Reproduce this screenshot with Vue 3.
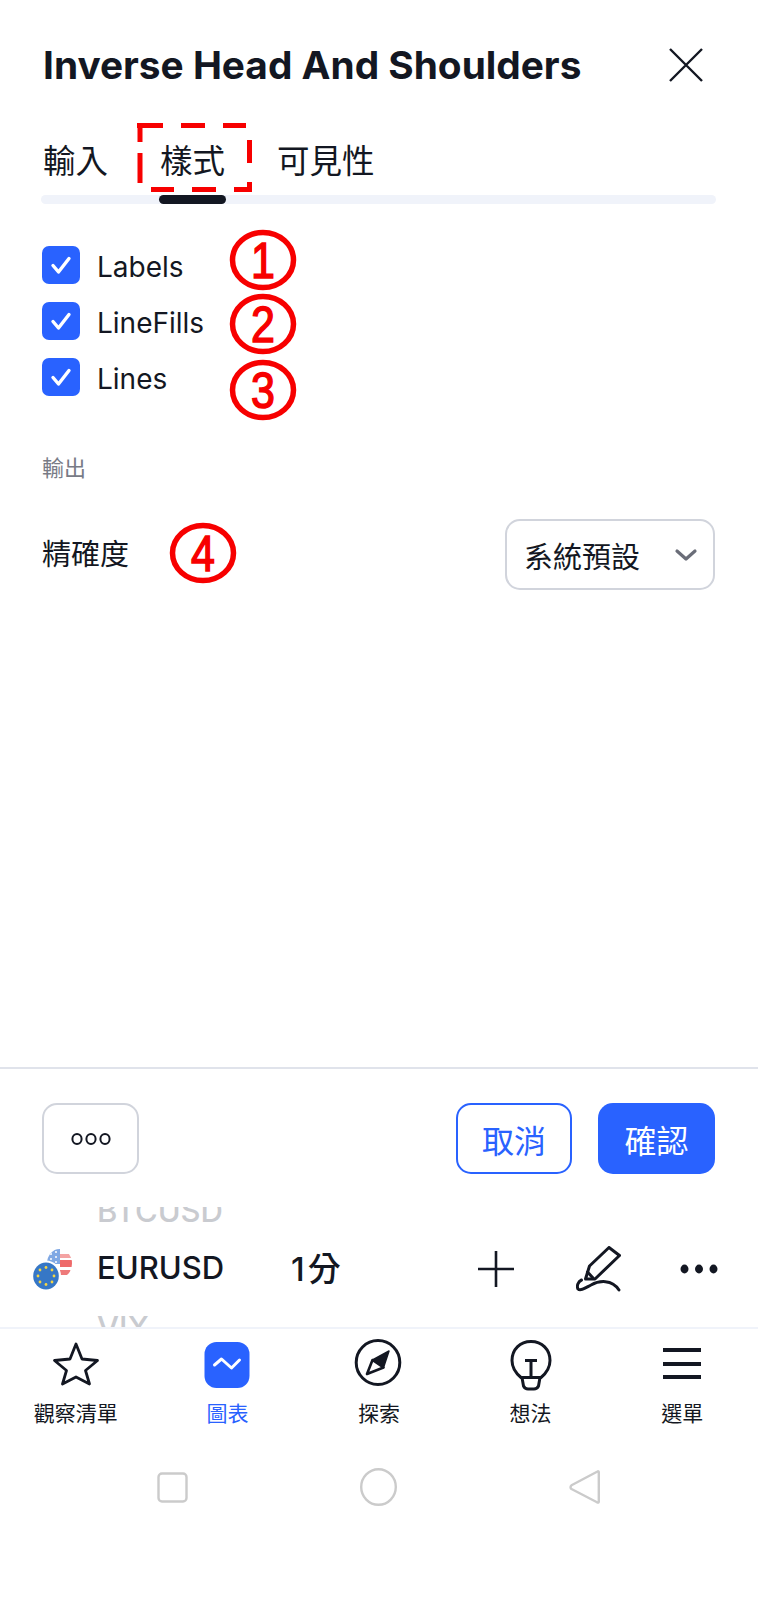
<script setup>
const tabs = [
  { label: '輸入' },
  { label: '樣式', active: true },
  { label: '可見性' }
]
const toggles = ['Labels', 'LineFills', 'Lines']
const callouts = [
  { cx: 263, cy: 260, n: '1' },
  { cx: 263, cy: 324, n: '2' },
  { cx: 263, cy: 390, n: '3' },
  { cx: 203, cy: 553, n: '4' }
]
const navItems = [
  { key: 'star', label: '觀察清單' },
  { key: 'chart', label: '圖表', active: true },
  { key: 'compass', label: '探索' },
  { key: 'bulb', label: '想法' },
  { key: 'menu', label: '選單' }
]
</script>

<template>
  <div class="page">
    <section class="sheet">
      <header class="head">
        <h1 class="title">Inverse Head And Shoulders</h1>
        <svg class="close" width="34" height="34" viewBox="0 0 34 34">
          <path d="M1 1L33 33M33 1L1 33" fill="none" stroke="#131722" stroke-width="2.4" />
        </svg>
      </header>

      <nav class="tabs">
        <span v-for="t in tabs" :key="t.label" class="tab" :class="{ on: t.active }">{{ t.label }}</span>
      </nav>
      <div class="tab-track"></div>

      <ul class="checks">
        <li v-for="name in toggles" :key="name" class="check">
          <span class="box">
            <svg width="22" height="20" viewBox="0 0 22 20">
              <path d="M3 10.500L8.500 17L19 3.500" fill="none" stroke="#fff" stroke-width="3.400" stroke-linecap="round" stroke-linejoin="round" />
            </svg>
          </span>
          <span class="check-label">{{ name }}</span>
        </li>
      </ul>

      <div class="group-title">輸出</div>
      <div class="field">
        <span class="field-label">精確度</span>
        <div class="select">
          <span>系統預設</span>
          <svg width="24" height="14" viewBox="0 0 24 14">
            <path d="M3 3L12 11L21 3" fill="none" stroke="#6a6d78" stroke-width="3.200" stroke-linecap="round" stroke-linejoin="round" />
          </svg>
        </div>
      </div>
    </section>

    <footer class="actions">
      <button class="btn more">
        <svg width="44" height="14" viewBox="0 0 44 14">
          <g fill="none" stroke="#131722" stroke-width="2">
            <ellipse cx="8" cy="7" rx="4.600" ry="5" />
            <ellipse cx="22" cy="7" rx="4.600" ry="5" />
            <ellipse cx="36" cy="7" rx="4.600" ry="5" />
          </g>
        </svg>
      </button>
      <div class="spacer"></div>
      <button class="btn cancel">取消</button>
      <button class="btn confirm">確認</button>
    </footer>

    <div class="wheel">
      <div class="wheel-row ghost">BTCUSD</div>
      <div class="wheel-row current">
        <svg class="flags" width="42" height="46" viewBox="0 0 42 46">
          <defs>
            <clipPath id="us-clip"><ellipse cx="27.500" cy="17.500" rx="12.500" ry="14.500" /></clipPath>
          </defs>
          <g clip-path="url(#us-clip)">
            <rect x="14" y="2" width="28" height="32" fill="#fff" />
            <rect x="14" y="2" width="14" height="16" fill="#7fa8e4" />
            <g fill="#fff">
              <circle cx="19" cy="8" r="1" />
              <circle cx="24" cy="6" r="1" />
              <circle cx="24" cy="11" r="1" />
              <circle cx="19" cy="13" r="1" />
              <circle cx="24" cy="16" r="1" />
            </g>
            <rect x="28" y="8" width="14" height="4" fill="#f4a3a3" />
            <rect x="28" y="14" width="14" height="7" fill="#ee6a6a" />
            <rect x="28" y="24" width="14" height="5" fill="#ee7a7a" />
          </g>
          <ellipse cx="14" cy="30" rx="15" ry="15.500" fill="#fff" />
          <ellipse cx="14" cy="30" rx="12.800" ry="13.500" fill="#3677c6" />
          <g fill="#f4d545">
            <circle cx="14" cy="21.500" r="1.400" />
            <circle cx="20" cy="24" r="1.400" />
            <circle cx="22" cy="30" r="1.400" />
            <circle cx="20" cy="36" r="1.400" />
            <circle cx="14" cy="38.500" r="1.400" />
            <circle cx="8" cy="36" r="1.400" />
            <circle cx="6" cy="30" r="1.400" />
            <circle cx="8" cy="24" r="1.400" />
          </g>
        </svg>
        <span class="symbol">EURUSD</span>
        <span class="interval">1分</span>
        <div class="spacer"></div>
        <svg class="plus" width="38" height="38" viewBox="0 0 38 38">
          <path d="M19 1V37M1 19H37" fill="none" stroke="#131722" stroke-width="2.600" />
        </svg>
        <svg class="pen" width="46" height="46" viewBox="0 0 46 46">
          <g fill="none" stroke="#131722" stroke-width="3" stroke-linecap="round" stroke-linejoin="round">
            <path d="M13.500 20L33 1.500L43.500 9.500L19 33L9.500 33Z" />
            <path d="M11.500 26L17 32" />
            <path d="M5.500 34C2 35.500 0.500 40 2 43C4.500 45.500 10 41.500 15 39C23 34.500 36 33 43 44" />
          </g>
        </svg>
        <svg class="dots" width="38" height="10" viewBox="0 0 38 10">
          <ellipse cx="4.500" cy="5" rx="4" ry="4.400" fill="#131722" />
          <ellipse cx="19" cy="5" rx="4" ry="4.400" fill="#131722" />
          <ellipse cx="33.500" cy="5" rx="4" ry="4.400" fill="#131722" />
        </svg>
      </div>
      <div class="wheel-row ghost">VIX</div>
    </div>

    <nav class="bottom-nav">
      <div v-for="item in navItems" :key="item.key" class="nav-item" :class="{ on: item.active }">
        <svg class="nav-icon" width="50" height="52" viewBox="0 0 50 52">
          <path v-if="item.key === 'star'" d="M25 5L31 20L46.500 21.500L34.500 31.500L38.500 45L25 38L11.500 45L15.500 31.500L3.500 21.500L19 20Z" fill="none" stroke="#131722" stroke-width="2.800" stroke-linejoin="round" />
          <template v-else-if="item.key === 'chart'">
            <rect x="2.500" y="3" width="45" height="46" rx="12" fill="#2962ff" />
            <path d="M12.500 26L19.500 20L29.500 29L37.500 21" fill="none" stroke="#fff" stroke-width="3" stroke-linecap="round" stroke-linejoin="round" />
          </template>
          <template v-else-if="item.key === 'compass'">
            <ellipse cx="24" cy="23.500" rx="21.800" ry="22" fill="none" stroke="#131722" stroke-width="3" />
            <path d="M35 12L29.500 28.500L18.500 21Z" fill="#131722" stroke="#131722" stroke-width="1.500" stroke-linejoin="round" />
            <path d="M13 35L18.500 21L29.500 28.500Z" fill="#fff" stroke="#131722" stroke-width="2.600" stroke-linejoin="round" />
          </template>
          <template v-else-if="item.key === 'bulb'">
            <path d="M15 38.500C9 33.500 6 28 6 21.500C6 10.500 14 2.500 25 2.500C36 2.500 44 10.500 44 21.500C44 28 41 33.500 35 38.500Z" fill="none" stroke="#131722" stroke-width="3" stroke-linejoin="round" />
            <path d="M19 21.500H31M25 21.500V38" fill="none" stroke="#131722" stroke-width="3" />
            <path d="M16 38.500H34L32.500 47C31.500 49 30 50 28 50H22C20 50 18.500 49 17.500 47Z" fill="none" stroke="#131722" stroke-width="3" stroke-linejoin="round" />
          </template>
          <path v-else d="M6 11H44M6 25H44M6 38H44" fill="none" stroke="#131722" stroke-width="4" />
        </svg>
        <span class="nav-label">{{ item.label }}</span>
      </div>
    </nav>

    <div class="system-bar">
      <svg width="31" height="31" viewBox="0 0 31 31">
        <rect x="1.500" y="1.500" width="28" height="28" rx="3.500" fill="none" stroke="#cbcbcb" stroke-width="2.400" />
      </svg>
      <svg width="37" height="38" viewBox="0 0 37 38">
        <ellipse cx="18.500" cy="19" rx="17.300" ry="17.800" fill="none" stroke="#cbcbcb" stroke-width="2.400" />
      </svg>
      <svg width="31" height="36" viewBox="0 0 31 36">
        <path d="M28.500 2.500C29.300 2 29.800 2.600 29.800 3.500V32.500C29.800 33.700 29 34 28 33.200L2.500 20C1.200 18.800 1.200 17.500 2.500 16.300Z" fill="none" stroke="#cbcbcb" stroke-width="2.400" stroke-linejoin="round" />
      </svg>
    </div>

    <!-- Red callouts drawn on top of the settings sheet -->
    <svg class="markup" width="758" height="600" viewBox="0 0 758 600">
      <path d="M137 125.500H163M181 125.500H205M223 125.500H246M249.500 140V163M249.500 182V192M251 189.500H234M216 189.500H192M174 189.500H151M140 183V153M140 142V123" fill="none" stroke="#f70000" stroke-width="5" />
      <g v-for="c in callouts" :key="c.n">
        <ellipse :cx="c.cx" :cy="c.cy" rx="30.500" ry="27.500" fill="none" stroke="#f70000" stroke-width="5.500" />
        <text class="markup-num" :transform="`translate(${c.cx},${c.cy + 18}) scale(.86,1)`" text-anchor="middle">{{ c.n }}</text>
      </g>
    </svg>
  </div>
</template>

<style scoped>
.page {
  position: relative;
  width: 758px;
  height: 1600px;
  overflow: hidden;
  background: #fff;
  color: #131722;
  font-family: Inter, "Noto Sans CJK TC", sans-serif;
  display: flex;
  flex-direction: column;
}
.sheet {
  height: 1067px;
  padding: 0 42px 0 42px;
  box-sizing: border-box;
  flex: none;
}
.head {
  display: flex;
  align-items: center;
  justify-content: space-between;
  height: 40px;
  margin-top: 45px;
  padding-right: 13px;
}
.title {
  margin: 0 0 0 1px;
  font-size: 38.800px;
  font-weight: 700;
  line-height: 40px;
  white-space: nowrap;
}
.close {
  flex: none;
}
.tabs {
  display: flex;
  gap: 52px;
  margin: 57px 0 0 1px;
  height: 53px;
}
.tab {
  position: relative;
  font-size: 32.500px;
  line-height: 40px;
  font-weight: 400;
}
.tab.on::after {
  content: "";
  position: absolute;
  left: -1px;
  right: -1px;
  top: 53px;
  height: 9px;
  border-radius: 5px;
  background: #131722;
}
.tab-track {
  height: 9px;
  margin-left: -1px;
  border-radius: 5px;
  background: #f0f3fa;
}
.checks {
  list-style: none;
  margin: 42px 0 0;
  padding: 0;
  display: flex;
  flex-direction: column;
  gap: 18px;
}
.check {
  display: flex;
  align-items: center;
  gap: 17px;
  height: 38px;
}
.box {
  width: 38px;
  height: 38px;
  border-radius: 7px;
  background: #2962ff;
  display: flex;
  align-items: center;
  justify-content: center;
}
.check-label {
  font-size: 28px;
  line-height: 37px;
  position: relative;
  top: 2px;
}
.group-title {
  margin: 61px 0 0;
  font-size: 22px;
  line-height: 22px;
  color: #787b86;
}
.field {
  display: flex;
  align-items: center;
  justify-content: space-between;
  margin: 40px 1px 0 0;
  height: 71px;
}
.field-label {
  font-size: 29px;
  line-height: 40px;
}
.select {
  width: 210px;
  height: 71px;
  box-sizing: border-box;
  border: 2px solid #d1d4dc;
  border-radius: 15px;
  display: flex;
  align-items: center;
  justify-content: space-between;
  padding: 0 15px 0 17px;
  font-size: 29px;
}
.actions {
  flex: none;
  box-sizing: border-box;
  height: 140px;
  border-top: 2px solid #e0e3eb;
  padding: 34px 43px 0 42px;
  display: flex;
  align-items: flex-start;
  gap: 26px;
}
.spacer {
  flex: 1;
}
.btn {
  height: 71px;
  box-sizing: border-box;
  border-radius: 15px;
  font-family: inherit;
  font-size: 32px;
  padding: 0;
  background: #fff;
  display: flex;
  align-items: center;
  justify-content: center;
}
.more {
  width: 97px;
  border: 2px solid #d1d4dc;
}
.cancel {
  width: 116px;
  border: 2px solid #2962ff;
  color: #2962ff;
}
.confirm {
  width: 117px;
  border: 0;
  background: #2962ff;
  color: #fff;
}
.wheel {
  flex: none;
  height: 120px;
  overflow: hidden;
}
.wheel-row {
  height: 58.500px;
  display: flex;
  align-items: center;
  font-size: 31px;
  font-weight: 500;
  padding-left: 97px;
  box-sizing: border-box;
}
.ghost {
  color: #c9cbd0;
}
.ghost:first-child {
  margin-top: -26px;
}
.current {
  position: relative;
  padding-left: 32px;
  padding-right: 40px;
}
.flags {
  flex: none;
  margin-right: 23px;
}
.symbol {
  width: 194px;
  flex: none;
  position: relative;
  top: -1px;
}
.interval {
  font-size: 33px;
  font-weight: 500;
  letter-spacing: 3px;
  position: relative;
  top: -2px;
}
.plus {
  flex: none;
  margin-right: 61px;
}
.pen {
  flex: none;
  margin-right: 58px;
}
.dots {
  flex: none;
}
.bottom-nav {
  flex: none;
  height: 116px;
  border-top: 2px solid #f0f3fa;
  box-sizing: border-box;
  display: grid;
  grid-template-columns: repeat(5, 1fr);
  padding-top: 10px;
}
.nav-item {
  display: flex;
  flex-direction: column;
  align-items: center;
}
.nav-icon {
  display: block;
}
.nav-label {
  margin-top: 8px;
  font-size: 21px;
  line-height: 30px;
}
.nav-item.on .nav-label {
  color: #2962ff;
}
.system-bar {
  flex: none;
  display: flex;
  align-items: center;
  gap: 172px;
  padding-left: 157px;
  margin-top: 25px;
  height: 38px;
}
.markup {
  position: absolute;
  left: 0;
  top: 0;
  pointer-events: none;
}
.markup-num {
  font-family: "Liberation Sans", sans-serif;
  font-size: 50px;
  font-weight: 400;
  fill: #f70000;
  stroke: #f70000;
  stroke-width: 1.500px;
}
</style>
